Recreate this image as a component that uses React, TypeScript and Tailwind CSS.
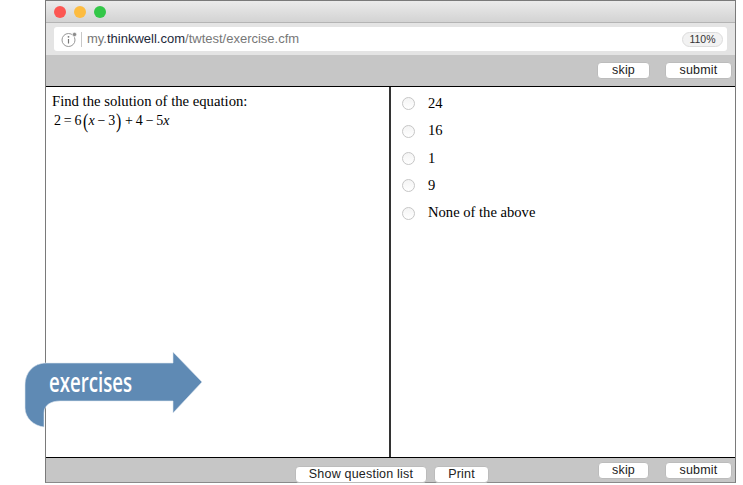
const MAC_BTN = 'h-[17px] rounded-[4px] bg-white border border-[#bcbcbc] text-[12.5px] leading-[15px] text-[#222] tracking-[0.2px] text-center font-["Liberation_Sans",sans-serif]'

const ANSWERS = ['24', '16', '1', '9', 'None of the above']

function ExercisesTag() {
  return (
    <div className="absolute left-[24px] top-[350px] w-[180px] h-[80px]">
      <svg width="180" height="80" viewBox="0 0 180 80" className="absolute inset-0">
        <path
          d="M22 13 L149 13 L149 2 L178 32 L149 63 L149 51 L36 51 C27 51 20 55 20 63 C20 69 20 73 20 77 C10 76 1 68 1 58 L1 35 C1 22 10 13 22 13 Z"
          fill="#5f8ab4"
          stroke="#dfe8f0"
          strokeWidth="0.6"
        />
      </svg>
      <span className="absolute left-[25px] top-[17px] text-[27px] leading-[30px] font-semibold text-white origin-left scale-x-[0.69] font-['Open_Sans',sans-serif]">
        exercises
      </span>
    </div>
  )
}

export default function App() {
  return (
    <div className="relative w-[743px] h-[485px] bg-white overflow-hidden">
      <div className="ml-[45px] w-[691px] h-[483px] border border-[#7a7a7a] border-b-[#8a8a8a] flex flex-col">
        {/* title bar */}
        <div className="h-[22px] shrink-0 flex items-center gap-[8px] pl-[8px] bg-gradient-to-b from-[#ebebeb] to-[#d3d3d3] border-b border-[#b4b4b4]">
          <span className="w-[12px] h-[12px] rounded-full bg-[#fc5753]" />
          <span className="w-[12px] h-[12px] rounded-full bg-[#fdbc40]" />
          <span className="w-[12px] h-[12px] rounded-full bg-[#33c748]" />
        </div>

        {/* url bar */}
        <div className="h-[32px] shrink-0 bg-[#e4e4e4] pl-[8px] pr-[8px] pt-[4px]">
          <div className="h-[24px] bg-white rounded-[3px] flex items-center pl-[7px] pr-[4px]">
            <svg width="17" height="17" viewBox="0 0 17 17" className="shrink-0">
              <circle cx="7.5" cy="9" r="6.5" fill="none" stroke="#8c8c8c" strokeWidth="0.9" />
              <circle cx="7.5" cy="5.8" r="0.9" fill="#777" />
              <path d="M7.5 8 V12.5" stroke="#777" strokeWidth="1.2" />
              <circle cx="13.5" cy="3.5" r="2.2" fill="#8c8c8c" stroke="#fff" strokeWidth="0.8" />
            </svg>
            <span className="ml-[3px] w-px h-[15px] bg-[#c8c8c8]" />
            <span className="ml-[5px] text-[13px] text-[#777] font-['Liberation_Sans',sans-serif]">
              my.<span className="text-[#1d2a3a]">thinkwell.com</span>/twtest/exercise.cfm
            </span>
            <span className="ml-auto w-[41px] h-[15px] rounded-full bg-[#f2f2f2] border border-[#dcdcdc] text-[10.5px] leading-[13px] text-center text-[#333] font-['Liberation_Sans',sans-serif]">
              110%
            </span>
          </div>
        </div>

        {/* top toolbar */}
        <div className="h-[32px] shrink-0 bg-[#c6c6c6] border-b border-black flex justify-end items-start pt-[7px] pr-[3px] gap-[15px]">
          <button className={`${MAC_BTN} w-[53px]`}>skip</button>
          <button className={`${MAC_BTN} w-[67px]`}>submit</button>
        </div>

        {/* question + answers */}
        <div className="flex-1 flex min-h-0 font-['Liberation_Serif',serif] text-black">
          <div className="w-[345px] shrink-0 border-r-2 border-[#333] pl-[6px] pt-[6px]">
            <p className="text-[14.7px] leading-[17px]">Find the solution of the equation:</p>
            <p className="ml-[2px] mt-[2px] text-[14px] leading-[18px] flex items-center whitespace-pre">
              2{'\u2009'}={'\u2009'}6<span className="text-[21px] leading-[18px] font-light scale-x-75">(</span>
              <i>x</i>{'\u2009'}−{'\u2009'}3<span className="text-[21px] leading-[18px] font-light scale-x-75">)</span>{'\u2009'}+{'\u2009'}4{'\u2009'}−{'\u2009'}5<i>x</i>
            </p>
          </div>
          <div className="flex-1 pt-[3px] pl-[11px]">
            {ANSWERS.map((answer) => (
              <div key={answer} className="h-[27.4px] flex items-center">
                <span className="w-[13px] h-[13px] rounded-full border border-[#c6c6c6] bg-gradient-to-b from-[#f4f4f4] to-white shrink-0" />
                <span className="ml-[13px] text-[14.6px]">{answer}</span>
              </div>
            ))}
          </div>
        </div>

        {/* bottom toolbar */}
        <div className="h-[25px] shrink-0 bg-[#c6c6c6] border-t border-black flex items-start relative pr-[3px]">
          <div className="flex gap-[7px] ml-[249px] mt-[8px]">
            <button className={`${MAC_BTN} w-[132px]`}>Show question list</button>
            <button className={`${MAC_BTN} w-[55px]`}>Print</button>
          </div>
          <div className="ml-auto flex gap-[16px] mt-[4px]">
            <button className={`${MAC_BTN} w-[51px]`}>skip</button>
            <button className={`${MAC_BTN} w-[67px]`}>submit</button>
          </div>
        </div>
      </div>

      <ExercisesTag />
    </div>
  )
}
